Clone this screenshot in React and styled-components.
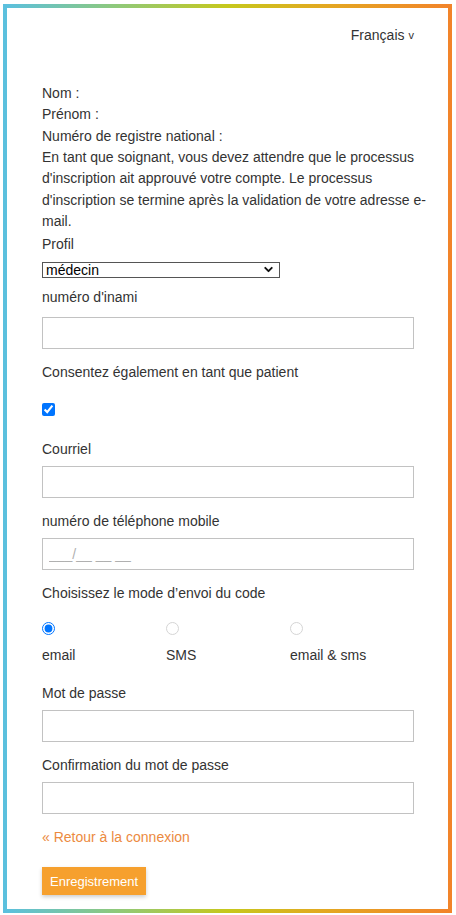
import React, { useState } from "react";
import styled, { createGlobalStyle } from "styled-components";
import { ChevronDown } from "lucide-react";

const GlobalStyle = createGlobalStyle`
  html, body {
    margin: 0;
    padding: 0;
    background: #fff;
  }
  body {
    font-family: "Liberation Sans", Arial, sans-serif;
    font-size: 14px;
    color: #333;
  }
  * {
    box-sizing: border-box;
  }
`;

const Frame = styled.div`
  display: flex;
  flex-direction: column;
  align-items: stretch;
  width: 449px;
  min-height: 909px;
  margin: 4px 0 0 3px;
  padding: 17px 34px 13px 35px;
  border: 4px solid;
  border-image: linear-gradient(
      to right,
      #5bc0de 0%,
      #8fc97a 25%,
      #c6c81c 50%,
      #e3a821 72%,
      #f2842a 100%
    )
    1;
`;

const LangBar = styled.div`
  display: flex;
  justify-content: flex-end;
  line-height: 21px;
  .lang__caret {
    margin-left: 4px;
    font-size: 11px;
  }
`;

const Info = styled.div`
  margin-top: 37px;
  margin-right: -15px;
  line-height: 21.33px;
`;

const Label = styled.div`
  line-height: 21px;
  margin-bottom: ${(props) => (props.gap === undefined ? 6 : props.gap)}px;
`;

const Group = styled.div`
  display: flex;
  flex-direction: column;
  align-items: stretch;
  margin-top: ${(props) => props.top || 0}px;
  margin-bottom: 13px;
`;

const SelectWrap = styled.div`
  position: relative;
  width: 238px;
  height: 16px;
  svg {
    position: absolute;
    right: 5px;
    top: 1px;
    color: #111;
    pointer-events: none;
  }
`;

const Select = styled.select`
  display: block;
  width: 100%;
  height: 100%;
  padding: 0 0 0 3px;
  border: 1px solid #555;
  border-radius: 0;
  background: #fff;
  appearance: none;
  font-family: "Liberation Sans", Arial, sans-serif;
  font-size: 14px;
  line-height: 14px;
  color: #000;
  outline: none;
`;

const TextInput = styled.input`
  display: block;
  width: 100%;
  height: 32px;
  padding: 0 6px;
  border: 1px solid #c2c2c2;
  border-radius: 0;
  font-family: "Liberation Sans", Arial, sans-serif;
  font-size: 14px;
  color: #333;
  &::placeholder {
    color: #b0b0b0;
  }
`;

const Check = styled.input`
  display: block;
  width: 13px;
  height: 13px;
  margin: ${(props) => props.top || 0}px 0 0 0;
`;

const RadioRow = styled.div`
  display: grid;
  grid-template-columns: repeat(3, 124px);
  margin-top: 18px;
  margin-bottom: 17px;
`;

const RadioCell = styled.label`
  display: flex;
  flex-direction: column;
  align-items: flex-start;
  gap: 10px;
  line-height: 21px;
  cursor: pointer;
  input {
    width: 13px;
    height: 13px;
    margin: 0;
  }
  input:not(:checked) {
    opacity: 0.3;
  }
`;

const BackLink = styled.a`
  display: block;
  line-height: 21px;
  color: #ec8a3e;
  text-decoration: none;
  cursor: pointer;
`;

const SubmitButton = styled.button`
  align-self: flex-start;
  margin-top: 19px;
  height: 28px;
  padding: 0 8px;
  border: none;
  border-radius: 0;
  background: #f6a02e;
  color: #fff;
  font-family: "Liberation Sans", Arial, sans-serif;
  font-size: 13px;
  box-shadow: 0 2px 4px rgba(0, 0, 0, 0.2);
  cursor: pointer;
`;

const modes = [
  { id: "email", label: "email" },
  { id: "sms", label: "SMS" },
  { id: "both", label: "email & sms" },
];

export default function App() {
  const [mode, setMode] = useState("email");
  const [patient, setPatient] = useState(true);

  return (
    <>
      <GlobalStyle />
      <Frame>
        <LangBar>
          Français<span className="lang__caret">v</span>
        </LangBar>

        <Info>
          <div>Nom :</div>
          <div>Prénom :</div>
          <div>Numéro de registre national :</div>
          <div>
            En tant que soignant, vous devez attendre que le processus
            d'inscription ait approuvé votre compte. Le processus
            d'inscription se termine après la validation de votre adresse
            e-mail.
          </div>
        </Info>

        <Group top={2}>
          <Label gap={7}>Profil</Label>
          <SelectWrap>
            <Select defaultValue="medecin">
              <option value="medecin">médecin</option>
              <option value="infirmier">infirmier</option>
              <option value="pharmacien">pharmacien</option>
            </Select>
            <ChevronDown size={13} strokeWidth={3.5} />
          </SelectWrap>
        </Group>

        <Group top={-4}>
          <Label gap={9}>numéro d'inami</Label>
          <TextInput type="text" />
        </Group>

        <Group>
          <Label gap={0}>Consentez également en tant que patient</Label>
          <Check
            type="checkbox"
            top={20}
            checked={patient}
            onChange={() => setPatient(!patient)}
          />
        </Group>

        <Group top={10}>
          <Label>Courriel</Label>
          <TextInput type="email" />
        </Group>

        <Group>
          <Label>numéro de téléphone mobile</Label>
          <TextInput type="tel" placeholder="___/__ __ __" />
        </Group>

        <div>
          <Label gap={0}>Choisissez le mode d’envoi du code</Label>
          <RadioRow>
            {modes.map((m) => (
              <RadioCell key={m.id}>
                <input
                  type="radio"
                  name="mode"
                  checked={mode === m.id}
                  onChange={() => setMode(m.id)}
                />
                {m.label}
              </RadioCell>
            ))}
          </RadioRow>
        </div>

        <Group>
          <Label>Mot de passe</Label>
          <TextInput type="password" />
        </Group>

        <Group>
          <Label>Confirmation du mot de passe</Label>
          <TextInput type="password" />
        </Group>

        <BackLink>« Retour à la connexion</BackLink>
        <SubmitButton type="button">Enregistrement</SubmitButton>
      </Frame>
    </>
  );
}
